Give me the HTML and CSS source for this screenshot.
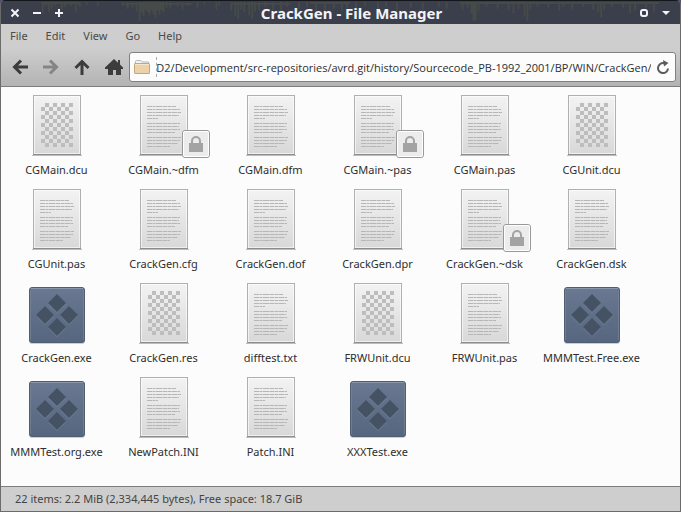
FILE: index.html
```html
<!DOCTYPE html>
<html lang="en">
<head>
<meta charset="utf-8">
<title>CrackGen - File Manager</title>
<link rel="stylesheet" href="styles.css">
<script src="location.js" defer></script>
</head>
<body>
<svg class="defs" aria-hidden="true">
  <defs>
    <linearGradient id="paper" x1="0" y1="0" x2="0" y2="1"><stop offset="0" stop-color="#f3f3f3"/><stop offset="1" stop-color="#d8d8d8"/></linearGradient>
    <linearGradient id="steel" x1="0" y1="0" x2="0" y2="1"><stop offset="0" stop-color="#6a7892"/><stop offset="1" stop-color="#56667e"/></linearGradient>
    <pattern id="check" x="16" y="10" width="8" height="8" patternUnits="userSpaceOnUse"><path d="M4 0h4v4h-4zM0 4h4v4h-4z" fill="#bdbdbd"/></pattern>
  </defs>
  <symbol id="sheet" viewBox="0 0 64 64">
    <path d="M7 62.5h50" stroke="#000" stroke-opacity=".25" stroke-width="1"/>
    <rect x="8.5" y="2.5" width="47" height="59" fill="url(#paper)" stroke="#b0b0b0"/>
    <rect x="9.5" y="3.5" width="45" height="57" fill="none" stroke="#fff" stroke-opacity=".6"/>
    <path d="M8 61.5h48" stroke="#8c8c8c"/>
  </symbol>
  <symbol id="text" viewBox="0 0 64 64">
    <use href="#sheet"/>
    <path d="M15 13.5h29M15 16.5h33M15 19.5h34M15 22.5h32M15 25.5h11M15 30.5h33M15 33.5h32M15 36.5h33M15 39.5h28M15 44.5h34M15 47.5h33M15 50.5h31M15 53.5h23" stroke="#b6b6b6" stroke-dasharray="5 .5 3 .5 6 .5"/>
  </symbol>
  <symbol id="binary" viewBox="0 0 64 64">
    <use href="#sheet"/>
    <rect x="16" y="10" width="32" height="44" fill="url(#check)"/>
  </symbol>
  <symbol id="exe" viewBox="0 0 64 64">
    <rect x="4" y="7" width="56" height="56" rx="3" fill="#000" fill-opacity=".18"/>
    <rect x="4.5" y="6.5" width="55" height="55" rx="2.5" fill="url(#steel)" stroke="#4f5d75"/>
    <path d="M6 7.5h52" stroke="#8995aa"/>
    <path d="M5.5 9v50M58.5 9v50" stroke="#7a879e" stroke-opacity=".6"/>
    <path d="M32 14l9 9-9 9-9-9zM20 26l9 9-9 9-9-9zM44 26l9 9-9 9-9-9zM32 38l9 9-9 9-9-9z" fill="#7d8aa0" fill-opacity=".6"/>
    <path d="M32 13l9 9-9 9-9-9zM20 25l9 9-9 9-9-9zM44 25l9 9-9 9-9-9zM32 37l9 9-9 9-9-9z" fill="#445263"/>
  </symbol>
  <symbol id="lock" viewBox="0 0 28 28">
    <rect x=".5" y=".5" width="27" height="27" rx="2.5" fill="#ececec" stroke="#999"/>
    <rect x="1.5" y="1.5" width="25" height="25" rx="1.5" fill="none" stroke="#fff"/>
    <path d="M10 14v-3a4 4 0 0 1 8 0v3" fill="none" stroke="#a3a3a3" stroke-width="2"/>
    <rect x="7" y="13" width="14" height="9" fill="#a3a3a3"/>
  </symbol>
</svg>

<div class="window">
  <header class="titlebar">
    <svg class="wave" viewBox="0 0 681 24" preserveAspectRatio="none" aria-hidden="true">
      <path d="M42 1v12M45 1v5M48 1v10M51 1v7M54 1v4M61 1v8M64 1v5M70 1v4M75 1v10M79 1v5M86 1v3M97 1v4M122 1v4M127 1v7M132 1v6M136 1v10M139 1v20M141 1v11M143 1v15M145 1v8M147 1v11M149 1v14M151 1v9M153 1v13M155 1v17M157 1v9M159 1v13M161 1v8M163 1v11M166 1v6M170 1v7M177 1v5M182 1v8M188 1v4M197 1v6M204 1v3M216 1v8M219 1v4M231 1v9M235 1v15M238 1v18M241 1v8M244 1v11M249 1v14M252 1v18M255 1v10M259 1v8M265 1v5M273 1v8M281 1v12M287 1v5M299 1v7M307 1v5M316 1v9M325 1v12M334 1v7M342 1v10M347 1v6M356 1v8M365 1v4M378 1v8M386 1v5M397 1v9M411 1v6M423 1v8M439 1v5M447 1v7M463 1v8M468 1v6M472 1v12M474 1v20M476 1v19M479 1v9M487 1v5M498 1v7M509 1v9M514 1v12M519 1v7M525 1v15M528 1v20M531 1v8M538 1v5M549 1v6M560 1v9M564 1v5M573 1v8M584 1v5M594 1v8M599 1v11M602 1v16M605 1v8M613 1v5M624 1v6M631 1v12M636 1v9M647 1v6M655 1v11M40 2h40M122 3h70M230 3h60M310 2h40M460 2h200"/>
    </svg>
    <div class="controls">
      <button aria-label="Close"><svg width="12" height="12" viewBox="0 0 12 12"><path d="M2.5 2.5l7 7M9.5 2.5l-7 7"/></svg></button>
      <button aria-label="Minimize"><svg width="12" height="12" viewBox="0 0 12 12"><path d="M2 6h8"/></svg></button>
      <button aria-label="Maximize"><svg width="12" height="12" viewBox="0 0 12 12"><path d="M2 6h8M6 2v8"/></svg></button>
    </div>
    <h1>CrackGen - File Manager</h1>
    <div class="controls">
      <button aria-label="Stick"><svg width="12" height="12" viewBox="0 0 12 12"><rect x="3" y="3" width="6" height="6" rx="2"/></svg></button>
      <button aria-label="Shade"><svg width="12" height="12" viewBox="0 0 12 12"><path class="solid" d="M2 4h8l-4 4z"/></svg></button>
    </div>
  </header>

  <nav class="menu" aria-label="Menu">
    <button>File</button><button>Edit</button><button>View</button><button>Go</button><button>Help</button>
  </nav>

  <div class="toolbar">
    <div class="tools">
      <button aria-label="Back"><svg width="16" height="16" viewBox="0 0 16 16"><path d="M9 1.5L2.5 8 9 14.5M3 8h13"/></svg></button>
      <button aria-label="Forward" disabled><svg width="16" height="16" viewBox="0 0 16 16"><path d="M7 1.5L13.5 8 7 14.5M13 8H0"/></svg></button>
      <button aria-label="Up"><svg width="16" height="16" viewBox="0 0 16 16"><path d="M1.5 9L8 2.5 14.5 9M8 3v13"/></svg></button>
      <button aria-label="Home"><svg width="18" height="16" viewBox="0 0 18 16"><path class="solid" d="M9 0l4 3.7V1h2v4.5L18 8.5V10h-2v6h-5v-5H8v5H3v-6H0V8.5z"/></svg></button>
    </div>
    <div class="location">
      <svg width="16" height="16" viewBox="0 0 16 16" aria-hidden="true"><path d="M1.5 14V2.5q0-1 1-1h4q.7 0 1 1l.3.5h6.7V14" fill="#f4f4f4" stroke="#b5b5b5"/><rect x=".5" y="4.5" width="15" height="10" rx=".5" fill="#ecd2aa" stroke="#c6a57c"/><path d="M1 5.5h14" stroke="#f6e5cb"/></svg>
      <input type="text" id="location" aria-label="Location" value="-RD2/Development/src-repositories/avrd.git/history/Sourcecode_PB-1992_2001/BP/WIN/CrackGen/">
      <button aria-label="Reload"><svg width="14" height="14" viewBox="0 0 14 14"><path class="reload" d="M12 8.5A5 5 0 1 1 8 3.2"/><path class="tip" d="M7 0l5.5 3L8 6.5z"/></svg></button>
    </div>
  </div>

  <main>
    <ul class="files">
      <li><svg class="icon"><use href="#binary"/></svg><span>CGMain.dcu</span></li>
      <li><svg class="icon"><use href="#text"/></svg><svg class="badge"><use href="#lock"/></svg><span>CGMain.~dfm</span></li>
      <li><svg class="icon"><use href="#text"/></svg><span>CGMain.dfm</span></li>
      <li><svg class="icon"><use href="#text"/></svg><svg class="badge"><use href="#lock"/></svg><span>CGMain.~pas</span></li>
      <li><svg class="icon"><use href="#text"/></svg><span>CGMain.pas</span></li>
      <li><svg class="icon"><use href="#binary"/></svg><span>CGUnit.dcu</span></li>
      <li><svg class="icon"><use href="#text"/></svg><span>CGUnit.pas</span></li>
      <li><svg class="icon"><use href="#text"/></svg><span>CrackGen.cfg</span></li>
      <li><svg class="icon"><use href="#text"/></svg><span>CrackGen.dof</span></li>
      <li><svg class="icon"><use href="#text"/></svg><span>CrackGen.dpr</span></li>
      <li><svg class="icon"><use href="#text"/></svg><svg class="badge"><use href="#lock"/></svg><span>CrackGen.~dsk</span></li>
      <li><svg class="icon"><use href="#text"/></svg><span>CrackGen.dsk</span></li>
      <li><svg class="icon"><use href="#exe"/></svg><span>CrackGen.exe</span></li>
      <li><svg class="icon"><use href="#binary"/></svg><span>CrackGen.res</span></li>
      <li><svg class="icon"><use href="#text"/></svg><span>difftest.txt</span></li>
      <li><svg class="icon"><use href="#binary"/></svg><span>FRWUnit.dcu</span></li>
      <li><svg class="icon"><use href="#text"/></svg><span>FRWUnit.pas</span></li>
      <li><svg class="icon"><use href="#exe"/></svg><span>MMMTest.Free.exe</span></li>
      <li><svg class="icon"><use href="#exe"/></svg><span>MMMTest.org.exe</span></li>
      <li><svg class="icon"><use href="#text"/></svg><span>NewPatch.INI</span></li>
      <li><svg class="icon"><use href="#text"/></svg><span>Patch.INI</span></li>
      <li><svg class="icon"><use href="#exe"/></svg><span>XXXTest.exe</span></li>
    </ul>
  </main>

  <footer>22 items: 2.2 MiB (2,334,445 bytes), Free space: 18.7 GiB</footer>
</div>
</body>
</html>
```

FILE: location.js
```js
// Keep the end of a long path in view.
const field = document.getElementById("location");
function showEnd() {
  field.scrollLeft = field.scrollWidth;
}
showEnd();
window.addEventListener("load", showEnd);
window.addEventListener("resize", showEnd);
```

FILE: styles.css
```css
* { box-sizing: border-box; }

body {
  margin: 0;
  background: #55536a;
  font: 11px/16px "Noto Sans", sans-serif;
  color: #2e2e2e;
}

button {
  margin: 0;
  padding: 0;
  border: 0;
  background: none;
  font: inherit;
  color: inherit;
}

svg { display: block; }

.defs {
  position: absolute;
  width: 0;
  height: 0;
}

.window {
  display: flex;
  flex-direction: column;
  min-height: 100vh;
  border: 1px solid #6b6b6b;
  border-top: 0;
  border-radius: 5px 5px 0 0;
  overflow: hidden;
}

.titlebar {
  position: relative;
  display: flex;
  align-items: center;
  height: 24px;
  padding: 1px 8px 0;
  background: #3b3e4b;
  border-top: 1px solid #15161b;
  color: #f2f4fa;
}

.wave {
  position: absolute;
  inset: 0;
  width: 100%;
  height: 100%;
  stroke: #454b48;
  stroke-width: 2;
}

.titlebar h1 {
  position: relative;
  flex: 1;
  margin: 0;
  font-size: 15px;
  line-height: 20px;
  font-weight: 700;
  text-align: center;
}

.controls {
  position: relative;
  display: flex;
  gap: 10px;
}

.controls svg {
  fill: none;
  stroke: currentColor;
  stroke-width: 2;
}

.controls .solid {
  fill: currentColor;
  stroke: none;
}

.menu {
  display: flex;
  gap: 18px;
  height: 24px;
  padding: 0 9px;
  background: #cecece;
  color: #4a4a4a;
}

.toolbar {
  display: flex;
  align-items: center;
  gap: 6px;
  padding: 4px 4px 4px 11px;
  background: linear-gradient(#cecece, #b3b3b3);
  border-bottom: 1px solid #7d7d7d;
}

.tools {
  display: flex;
  gap: 15px;
}

.tools svg {
  fill: none;
  stroke: #3c3c3c;
  stroke-width: 3;
}

.tools :disabled svg { stroke: #858585; }

.tools .solid {
  fill: #3c3c3c;
  stroke: none;
}

.location {
  display: flex;
  flex: 1;
  align-items: center;
  min-width: 0;
  height: 30px;
  padding: 0 5px 0 4px;
  border: 1px solid #808080;
  border-radius: 3px;
  background: #fcfcfc;
}

.location input {
  flex: 1;
  min-width: 0;
  height: 20px;
  margin: 0 5px 0 6px;
  padding: 0;
  border: 0;
  border-left: 1px dashed #aaa;
  background: none;
  font: 11px/16px "Open Sans", "Noto Sans", sans-serif;
  color: inherit;
}

.reload {
  fill: none;
  stroke: #5c5c5c;
  stroke-width: 2;
}

.tip { fill: #5c5c5c; }

main {
  flex: 1;
  padding: 6px 2px;
  background: #fcfcfc;
}

.files {
  display: grid;
  grid-template-columns: repeat(auto-fill, 107px);
  grid-auto-rows: 94px;
  margin: 0;
  padding: 0;
  list-style: none;
}

.files li {
  position: relative;
  display: flex;
  flex-direction: column;
  align-items: center;
  gap: 5px;
}

.icon {
  width: 64px;
  height: 64px;
}

.badge {
  position: absolute;
  top: 37px;
  right: 7px;
  width: 28px;
  height: 28px;
}

footer {
  padding: 4px 14px;
  border-top: 1px solid #7d7d7d;
  background: #cecece;
  color: #444;
}
```
